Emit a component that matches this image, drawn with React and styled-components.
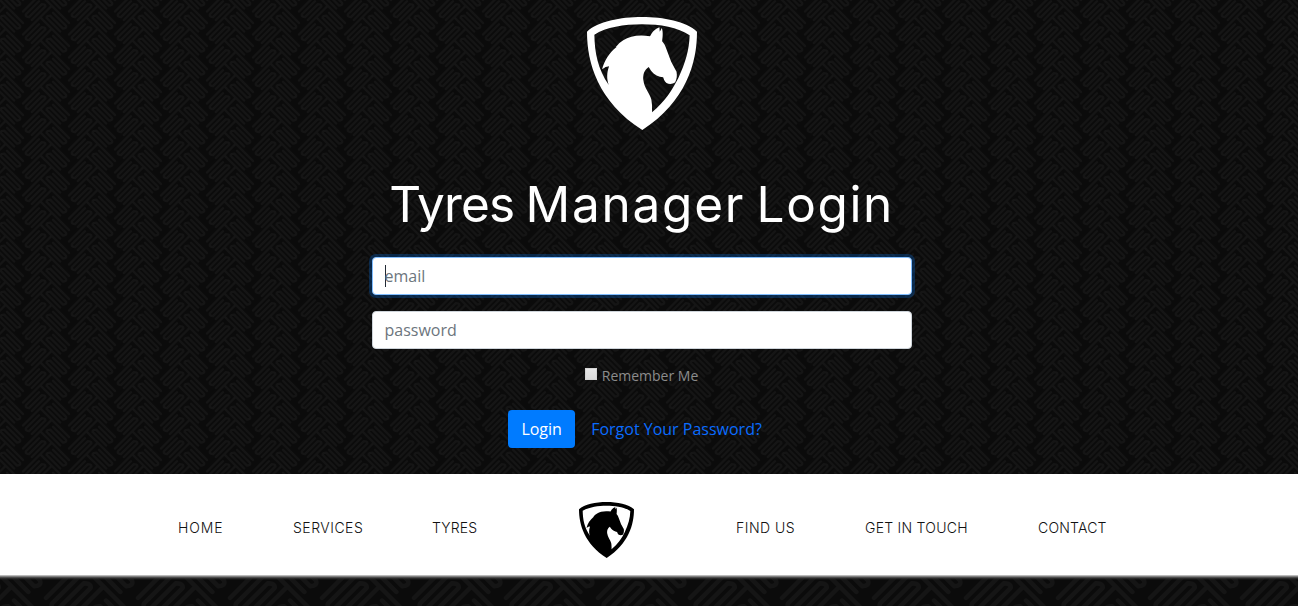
import React from "react";
import styled, { createGlobalStyle } from "styled-components";

const weave = (width, height) => {
  const strand =
    "M-5 -5L23 23M7 12.75L20 25.75Q21 28.5 17.1 28.6L4.1 15.6Q0.6 15.6 0.6 17.9L14.2 31.5";
  const copies = [-46, 0, 46]
    .map((x) => [-46, -23, 0, 23].map((y) => `<use href="#m" x="${x}" y="${y}"/>`).join(""))
    .join("");
  const svg = `<svg xmlns="http://www.w3.org/2000/svg" width="${width}" height="${height}" viewBox="0 0 46 23"><defs><g id="m" fill="none" stroke="#151515" stroke-width="2.2" stroke-linecap="round" stroke-linejoin="round"><path d="${strand}"/><path transform="translate(46 11.5) scale(-1 1)" d="${strand}"/></g></defs><rect width="46" height="23" fill="#0b0b0b"/>${copies}</svg>`;
  return `url("data:image/svg+xml,${encodeURIComponent(svg)}")`;
};

const GlobalStyle = createGlobalStyle`
  * { box-sizing: border-box; }
  body { margin: 0; background: #0c0c0c; font-family: "Open Sans", sans-serif; }
`;

const Page = styled.div`
  height: 606px;
  display: flex;
  flex-direction: column;
  overflow: hidden;
`;

const LoginSection = styled.main`
  height: 474px;
  padding: 17px 15px 0 0;
  display: flex;
  flex-direction: column;
  align-items: center;
  background: ${weave(46, 23)};
`;

const Logo = styled.svg`
  display: block;
  flex: none;
  width: ${(p) => p.$width}px;
  height: ${(p) => p.$height}px;
  color: ${(p) => p.$color};
`;

const Title = styled.h1`
  margin: 44px 0 22px;
  height: 61px;
  font: 400 49.5px/61px Inter, sans-serif;
  word-spacing: -2.5px;
  white-space: nowrap;
  color: #fff;
`;

const Word = styled.span`
  letter-spacing: ${(p) => p.$spacing}px;
`;

const Form = styled.form`
  width: 540px;
  display: flex;
  flex-direction: column;
  align-items: center;
`;

const Field = styled.div`
  width: 540px;
  height: 38px;
  margin-bottom: 16px;
  padding: 0 12px;
  display: flex;
  align-items: center;
  border: 1px solid ${(p) => (p.$focused ? "#80bdff" : "#ced4da")};
  border-radius: 4px;
  background: #fff;
  box-shadow: ${(p) => (p.$focused ? "0 0 0 3px rgba(0, 123, 255, 0.25)" : "none")};
  font-size: 16px;
  line-height: 24px;
  color: #6c757d;
`;

const Caret = styled.span`
  width: 1px;
  height: 22px;
  margin-right: -1px;
  background: #222b35;
`;

const Remember = styled.label`
  display: flex;
  height: 21px;
  font-size: 14px;
  line-height: 21px;
  color: #8c8c8c;
`;

const CheckBox = styled.span`
  width: 12px;
  height: 12px;
  margin: 3px 5px 0 0;
  border: 1px solid #d5d5d5;
  background: linear-gradient(#e8e8e8, #dcdcdc);
`;

const Actions = styled.div`
  display: flex;
  align-items: center;
  gap: 16px;
  margin: 24px 13px 0 0;
`;

const LoginButton = styled.button`
  width: 67px;
  height: 38px;
  padding: 0;
  border: 0;
  border-radius: 4px;
  background: #007bff;
  color: #fff;
  font: 400 16px/24px "Open Sans", sans-serif;
`;

const ForgotLink = styled.a`
  font-size: 16px;
  line-height: 24px;
  color: #0a6cff;
`;

const Nav = styled.nav`
  height: 101px;
  flex: none;
  padding: 0 14px 0 0;
  display: grid;
  grid-template-columns: 477px 259px 1fr;
  align-items: center;
  background: #fff;
`;

const Links = styled.div`
  display: flex;
  gap: 70px;
  height: 20px;
  margin-top: 6px;
  justify-content: ${(p) => (p.$end ? "flex-end" : "flex-start")};
`;

const NavLink = styled.a`
  width: ${(p) => p.$width}px;
  font: 300 14px/20px Inter, sans-serif;
  letter-spacing: ${(p) => p.$spacing}px;
  white-space: nowrap;
  color: #111;
`;

const NavBrand = styled.div`
  display: flex;
  justify-content: center;
  margin-top: 10px;
`;

const Footer = styled.div`
  flex: 1;
  background:
    linear-gradient(#ddd 0, #999 1px, #666 2px, #333 3px, transparent 5px),
    ${weave(92, 46)};
`;

const HorseShield = ({ width, height, color }) => (
  <Logo $width={width} $height={height} $color={color} viewBox="51 36 328 339" preserveAspectRatio="none">
    <path
      fill="currentColor"
      fillRule="evenodd"
      d="M51 80C83 49 151 36 215 36S347 49 379 80C379 173 347 289 216 375C83 289 51 173 51 80ZM73 89C74 144 83 190 116 240C109 222 110 202 117 184Q107 184 96 193C102 168 117 144 139 126H137Q144 115 159 106C179 93 207 88 239 94Q247 75 267 67L268 80L274 69C279 83 276 99 275 109C281 115 285 123 288 133L302 170L318 200C320 211 319 222 314 232C306 238 296 238 288 234C281 229 280 221 278 217C265 216 251 209 242 197L235 186C222 195 217 209 219 225C222 251 238 264 243 284Q246 299 245 322C283 291 307 252 323 220C345 174 356 133 357 91C322 67 269 58 215 58S108 67 73 89Z"
    />
  </Logo>
);

export default function App() {
  return (
    <Page>
      <GlobalStyle />
      <LoginSection>
        <HorseShield width={110} height={113} color="#fff" />
        <Title>
          <Word $spacing={-0.9}>Tyres</Word> <Word $spacing={1.75}>Manager</Word>{" "}
          <Word $spacing={1.6}>Login</Word>
        </Title>
        <Form>
          <Field $focused><Caret />email</Field>
          <Field>password</Field>
          <Remember><CheckBox />Remember Me</Remember>
          <Actions>
            <LoginButton type="button">Login</LoginButton>
            <ForgotLink>Forgot Your Password?</ForgotLink>
          </Actions>
        </Form>
      </LoginSection>
      <Nav>
        <Links $end>
          <NavLink $width={45} $spacing={0.9}>HOME</NavLink>
          <NavLink $width={69} $spacing={0.5}>SERVICES</NavLink>
          <NavLink $width={45} $spacing={0.15}>TYRES</NavLink>
        </Links>
        <NavBrand>
          <HorseShield width={55} height={56} color="#000" />
        </NavBrand>
        <Links>
          <NavLink $width={59} $spacing={0.5}>FIND US</NavLink>
          <NavLink $width={103} $spacing={0.25}>GET IN TOUCH</NavLink>
          <NavLink $width={69} $spacing={0.2}>CONTACT</NavLink>
        </Links>
      </Nav>
      <Footer />
    </Page>
  );
}
